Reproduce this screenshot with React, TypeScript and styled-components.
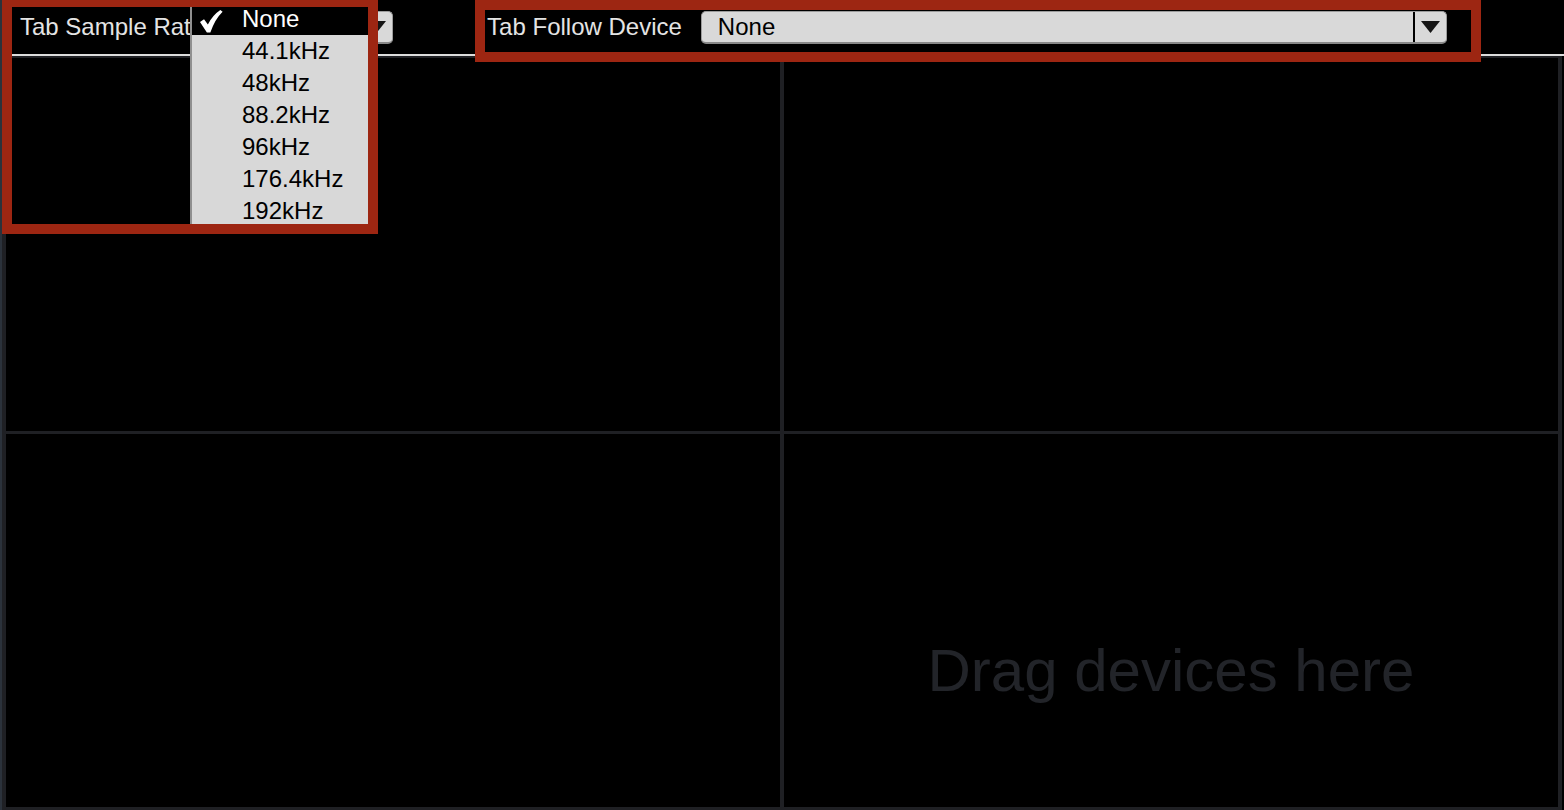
import styled, { createGlobalStyle } from 'styled-components';

const GlobalStyle = createGlobalStyle`
  html, body {
    margin: 0;
    padding: 0;
    background: #000;
  }
  body {
    font-family: "Liberation Sans", Arial, Helvetica, sans-serif;
    overflow: hidden;
  }
`;

const Screen = styled.div`
  position: relative;
  width: 1564px;
  height: 810px;
  display: flex;
  background: #000;
  overflow: hidden;
`;

const SideRail = styled.div`
  width: 2px;
  flex-shrink: 0;
  background: #2b323b;
`;

const Main = styled.div`
  flex: 1;
  min-width: 0;
  display: flex;
  flex-direction: column;
`;

const Toolbar = styled.div`
  height: 54px;
  flex-shrink: 0;
  display: flex;
  align-items: center;
  gap: 94px;
  padding-left: 18px;
`;

const Field = styled.div`
  display: flex;
  align-items: center;
  gap: 19px;
`;

const FieldLabel = styled.span`
  font-size: 24px;
  color: #e4e4e4;
  white-space: nowrap;
`;

const PopupButton = styled.div<{ $width: number }>`
  width: ${({ $width }) => $width}px;
  height: 33px;
  box-sizing: border-box;
  display: flex;
  align-items: stretch;
  background: #d9d9d9;
  border: 1px solid #9c9c9c;
  border-bottom: 2px solid #888;
  border-radius: 5px;
`;

const PopupValue = styled.span`
  flex: 1;
  display: flex;
  align-items: center;
  padding-left: 16px;
  font-size: 24px;
  color: #000;
`;

const PopupArrow = styled.span`
  width: 31px;
  flex-shrink: 0;
  display: flex;
  align-items: center;
  justify-content: center;
  border-left: 2px solid #000;
`;

const Rule = styled.div`
  height: 2px;
  flex-shrink: 0;
  background: #dcdcdc;
`;

const DeviceGrid = styled.div`
  flex: 1;
  margin-right: 2px;
  display: grid;
  grid-template-columns: 1fr 1fr;
  grid-template-rows: 1fr 1fr;
  gap: 3px 4px;
  padding: 2px 4px 3px 4px;
  background: #1f2024;
`;

const Cell = styled.div`
  background: #000;
  display: flex;
  justify-content: center;
  align-items: flex-start;
`;

const DropHint = styled.span`
  margin-top: 202px;
  font-size: 60px;
  line-height: 70px;
  color: #222429;
  white-space: nowrap;
`;

const Menu = styled.ul`
  position: absolute;
  left: 190px;
  top: 3px;
  width: 186px;
  margin: 0;
  padding: 0;
  list-style: none;
  background: #d8d8d8;
  border-left: 2px solid #8f8f8f;
`;

const MenuItem = styled.li<{ $selected?: boolean }>`
  height: 32px;
  display: flex;
  align-items: center;
  font-size: 24px;
  background: ${({ $selected }) => ($selected ? '#000' : 'transparent')};
  color: ${({ $selected }) => ($selected ? '#fff' : '#000')};
`;

const CheckSlot = styled.span`
  width: 50px;
  height: 100%;
  flex-shrink: 0;
  display: flex;
  align-items: center;
  padding-left: 8px;
  padding-top: 5px;
  box-sizing: border-box;
`;

const Callout = styled.div<{ $left: number; $top: number; $width: number; $height: number }>`
  position: absolute;
  left: ${({ $left }) => $left}px;
  top: ${({ $top }) => $top}px;
  width: ${({ $width }) => $width}px;
  height: ${({ $height }) => $height}px;
  box-sizing: border-box;
  border: 10px solid #9d2612;
  pointer-events: none;
`;

const rates = ['None', '44.1kHz', '48kHz', '88.2kHz', '96kHz', '176.4kHz', '192kHz'];

function Arrow() {
  return (
    <svg width="19" height="12" viewBox="0 0 19 12">
      <polygon points="0,0 19,0 9.5,12" fill="#151515" />
    </svg>
  );
}

function Check() {
  return (
    <svg width="23" height="23" viewBox="0 0 24 24">
      <path
        d="M0 12.5 L4.2 9.6 L8.2 15.2 Q13 5.5 21.2 0 L23.6 1.8 Q15.6 9.5 10.8 23.5 L7.2 23.5 Z"
        fill="#fff"
      />
    </svg>
  );
}

export default function App() {
  const selected = 'None';

  return (
    <>
      <GlobalStyle />
      <Screen>
        <SideRail />
        <Main>
          <Toolbar>
            <Field>
              <FieldLabel>Tab Sample Rate</FieldLabel>
              <PopupButton $width={170}>
                <PopupValue>None</PopupValue>
                <PopupArrow>
                  <Arrow />
                </PopupArrow>
              </PopupButton>
            </Field>
            <Field>
              <FieldLabel>Tab Follow Device</FieldLabel>
              <PopupButton $width={746}>
                <PopupValue>None</PopupValue>
                <PopupArrow>
                  <Arrow />
                </PopupArrow>
              </PopupButton>
            </Field>
          </Toolbar>
          <Rule />
          <DeviceGrid>
            <Cell />
            <Cell />
            <Cell />
            <Cell>
              <DropHint>Drag devices here</DropHint>
            </Cell>
          </DeviceGrid>
        </Main>

        <Menu>
          {rates.map((rate) => (
            <MenuItem key={rate} $selected={rate === selected}>
              <CheckSlot>{rate === selected && <Check />}</CheckSlot>
              {rate}
            </MenuItem>
          ))}
        </Menu>

        <Callout $left={2} $top={-3} $width={376} $height={237} />
        <Callout $left={475} $top={0} $width={1006} $height={62} />
      </Screen>
    </>
  );
}
